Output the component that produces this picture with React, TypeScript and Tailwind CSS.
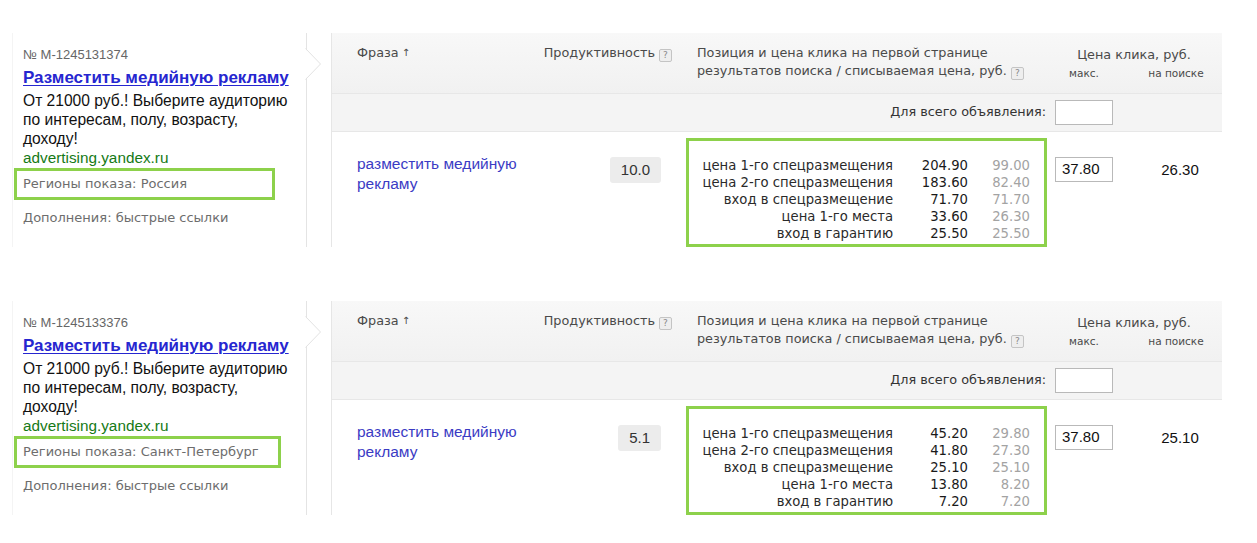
import React from "react";

type Row = { label: string; v1: string; v2: string };
type Block = {
  id: string;
  region: string;
  regionBoxW: string;
  prod: string;
  rows: Row[];
  max: string;
  search: string;
};

const blocks: Block[] = [
  {
    id: "№ M-1245131374",
    region: "Регионы показа: Россия",
    regionBoxW: "w-[261px]",
    prod: "10.0",
    rows: [
      { label: "цена 1-го спецразмещения", v1: "204.90", v2: "99.00" },
      { label: "цена 2-го спецразмещения", v1: "183.60", v2: "82.40" },
      { label: "вход в спецразмещение", v1: "71.70", v2: "71.70" },
      { label: "цена 1-го места", v1: "33.60", v2: "26.30" },
      { label: "вход в гарантию", v1: "25.50", v2: "25.50" },
    ],
    max: "37.80",
    search: "26.30",
  },
  {
    id: "№ M-1245133376",
    region: "Регионы показа: Санкт-Петербург",
    regionBoxW: "w-[267px]",
    prod: "5.1",
    rows: [
      { label: "цена 1-го спецразмещения", v1: "45.20", v2: "29.80" },
      { label: "цена 2-го спецразмещения", v1: "41.80", v2: "27.30" },
      { label: "вход в спецразмещение", v1: "25.10", v2: "25.10" },
      { label: "цена 1-го места", v1: "13.80", v2: "8.20" },
      { label: "вход в гарантию", v1: "7.20", v2: "7.20" },
    ],
    max: "37.80",
    search: "25.10",
  },
];

const arial = "font-['Liberation_Sans',Arial,sans-serif]";
const lucida = "font-['DejaVu_Sans',Verdana,sans-serif]";

function Help() {
  return (
    <span
      className={`inline-flex items-center justify-center w-[13px] h-[13px] ml-[4px] align-[-1px] border border-[#c4c4c4] bg-[#eeeeee] rounded-[2px] text-[9px] leading-none text-[#888] ${lucida}`}
    >
      ?
    </span>
  );
}

function Card({ b }: { b: Block }) {
  return (
    <div className="relative ml-[12px] w-[295px] border-r border-[#e4e4e4] border-l border-l-[#f4f4f4] pl-[10px] pt-[14px] h-[214px]">
      <div className={`${arial} text-[13px] leading-[16px] text-[#666]`}>{b.id}</div>
      <div className={`${arial} mt-[5px] text-[17px] leading-[20px] font-bold text-[#2626d0] underline underline-offset-2 decoration-1`}>
        Разместить медийную рекламу
      </div>
      <div className={`${arial} mt-[3px] text-[15.6px] leading-[19px] text-[#111] w-[272px]`}>
        От 21000 руб.! Выберите аудиторию по интересам, полу, возрасту, доходу!
      </div>
      <div className={`${arial} text-[15.3px] leading-[19px] text-[#167a16]`}>advertising.yandex.ru</div>
      <div className={`mt-[1px] -ml-[9px] ${b.regionBoxW} h-[32px] border-[3px] border-[#8dd14b] pl-[6px] flex items-center`}>
        <span className={`${lucida} text-[13px] leading-[16px] text-[#6d6d6d]`}>{b.region}</span>
      </div>
      <div className={`${lucida} mt-[10px] text-[13px] leading-[16px] text-[#6d6d6d]`}>Дополнения: быстрые ссылки</div>
      <svg
        className="absolute top-[15px] -right-[16px]"
        width="17"
        height="32"
        viewBox="0 0 17 32"
      >
        <polygon points="0,0.5 15.5,16 0,31.5" fill="#ffffff" />
        <polyline points="0.5,0.5 15.5,16 0.5,31.5" fill="none" stroke="#e2e2e2" strokeWidth="1" />
      </svg>
    </div>
  );
}

function Table({ b }: { b: Block }) {
  return (
    <div className="ml-[24px] w-[891px] border-l border-[#e6e6e6] h-[214px] flex flex-col">
      {/* header */}
      <div className={`grid grid-cols-[198px_150px_370px_172px] h-[60px] bg-gradient-to-b from-[#f8f8f8] to-[#f1f1f1] ${lucida} text-[12.8px] leading-[18px] text-[#4a4a4a]`}>
        <div className="pl-[25px] pt-[11px]">
          Фраза<span className="text-[10px] ml-[3px] align-[1px]">↑</span>
        </div>
        <div className="pt-[11px] pr-[8px] text-right whitespace-nowrap">
          Продуктивность
          <Help />
        </div>
        <div className="pt-[11px] pl-[17px]">
          Позиция и цена клика на первой странице
          <br />
          результатов поиска / списываемая цена, руб.
          <Help />
        </div>
        <div className="pt-[13px]">
          <div className="text-center pr-[4px]">Цена клика, руб.</div>
          <div className="grid grid-cols-[68px_1fr] text-[10.5px] leading-[14px] mt-[2px]">
            <div className="text-center">макс.</div>
            <div className="text-center pl-[12px]">на поиске</div>
          </div>
        </div>
      </div>
      {/* subheader */}
      <div className={`grid grid-cols-[718px_172px] h-[39px] bg-[#f4f4f4] border-t border-b border-[#e7e7e7] ${lucida}`}>
        <div className="text-right pr-[4px] pt-[9px] text-[12.8px] leading-[18px] text-[#333]">Для всего объявления:</div>
        <div className="pl-[5px] pt-[6px]">
          <div className="w-[58px] h-[25px] bg-white border border-[#b9b9b9]" />
        </div>
      </div>
      {/* data */}
      <div className="grid grid-cols-[198px_150px_370px_172px] flex-1">
        <div className={`pl-[25px] pt-[22px] ${arial} text-[15.5px] leading-[20px] text-[#3b3bc4]`}>
          разместить медийную
          <br />
          рекламу
        </div>
        <div className="pt-[25px] pr-[19px] flex justify-end items-start">
          <div className={`h-[26px] px-[11px] flex items-center bg-[#ececec] rounded-[3px] ${arial} text-[15px] text-[#333]`}>{b.prod}</div>
        </div>
        <div className="pl-[6px] pt-[6px]">
          <div className={`w-[361px] h-[109px] border-[3px] border-[#8dd14b] pt-[16px] ${lucida} text-[13.2px] leading-[17px]`}>
            {b.rows.map((r) => (
              <div key={r.label} className="grid grid-cols-[204px_75px_62px]">
                <div className="text-right text-[#2a2a2a] whitespace-nowrap">{r.label}</div>
                <div className="text-right text-[#1a1a1a]">{r.v1}</div>
                <div className="text-right text-[#a3a3a3]">{r.v2}</div>
              </div>
            ))}
          </div>
        </div>
        <div className="grid grid-cols-[68px_1fr] content-start">
          <div className="pl-[5px] pt-[25px]">
            <div className={`w-[58px] h-[25px] bg-white border border-[#b9b9b9] pl-[6px] flex items-center ${arial} text-[15px] text-[#111]`}>{b.max}</div>
          </div>
          <div className={`pt-[28px] pl-[20px] text-center ${arial} text-[15px] leading-[20px] text-[#111]`}>{b.search}</div>
        </div>
      </div>
    </div>
  );
}

export default function App() {
  return (
    <div className="w-[1257px] h-[543px] bg-white pt-[33px] flex flex-col gap-[54px] overflow-hidden">
      {blocks.map((b) => (
        <div key={b.id} className="flex">
          <Card b={b} />
          <Table b={b} />
        </div>
      ))}
    </div>
  );
}
